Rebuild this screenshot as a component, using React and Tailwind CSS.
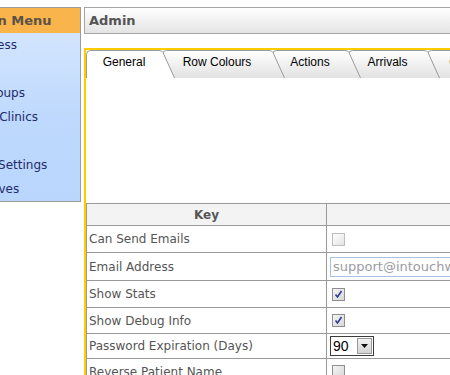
import React from 'react';

const MENU = [
  { label: 'Site Access', shift: 'ml-[-7px]' },
  { label: 'Users', shift: '' },
  { label: 'User Groups', shift: 'ml-[-5px]' },
  { label: 'Mobile Clinics', shift: '' },
  { label: 'Audit', shift: '' },
  { label: 'Global Settings', shift: '' },
  { label: 'Objectives', shift: '' },
];

const TABS = [
  { label: 'General', w: 76, z: 'z-[9]', active: true },
  { label: 'Row Colours', w: 110, z: 'z-[5]' },
  { label: 'Actions', w: 76, z: 'z-[4]' },
  { label: 'Arrivals', w: 79, z: 'z-[3]' },
  { label: 'Clinics', w: 80, z: 'z-[2]' },
];

const TAB_H = 28;

function Tab({ label, w, z, active }) {
  const d = `M0.5,${TAB_H} L0.5,4.5 Q0.5,0.5 4.5,0.5 L${w - 3},0.5 Q${w},0.5 ${w + 1},2.5 L${w + 12.5},${TAB_H}`;
  return (
    <div className={`relative shrink-0 h-[28px] ${z}`} style={{ width: w }}>
      <svg className="absolute left-0 top-0 overflow-visible" width={w + 13} height={TAB_H}>
        <defs>
          <linearGradient id="tabg" x1="0" y1="0" x2="0" y2="1">
            <stop offset="0" stopColor="#ffffff" />
            <stop offset="1" stopColor="#e2e2e2" />
          </linearGradient>
        </defs>
        <path d={d + ' Z'} fill={active ? '#ffffff' : 'url(#tabg)'} stroke="none" />
        <path d={d} fill="none" stroke="#9a9a9a" strokeWidth="1" />
      </svg>
      <div className="relative pt-[5px] text-center text-[12px] leading-[14px] text-black font-['Liberation_Sans',Arial,sans-serif]">
        {label}
      </div>
    </div>
  );
}

function Check({ checked, disabled }) {
  return (
    <span
      className={`inline-flex h-[13px] w-[13px] items-center justify-center border bg-gradient-to-br ${
        disabled
          ? 'border-[#bdbdbd] from-[#ffffff] to-[#e4e4e4]'
          : 'border-[#8e8e8e] from-[#f4f4f4] to-[#d8d8d8]'
      }`}
    >
      {checked && (
        <svg width="9" height="9" viewBox="0 0 9 9">
          <path d="M1.5,4.5 L3.5,7 L7.5,1" fill="none" stroke="#2a3c96" strokeWidth="1.6" />
        </svg>
      )}
    </span>
  );
}

const ROWS = [
  { key: 'Can Send Emails', h: 'h-[27px]', val: <Check disabled /> },
  {
    key: 'Email Address',
    h: 'h-[28px]',
    val: (
      <div className="ml-[-2px] flex h-[20px] w-[220px] items-center border border-[#a9c1de] pl-[2px] text-[13px] text-[#9c9ca4]">
        support@intouchwith.us
      </div>
    ),
  },
  { key: 'Show Stats', h: 'h-[27px]', val: <Check checked /> },
  { key: 'Show Debug Info', h: 'h-[26px]', val: <Check checked /> },
  {
    key: 'Password Expiration (Days)',
    h: 'h-[25px]',
    val: (
      <div className="ml-[-2px] flex h-[20px] w-[44px] items-center border border-[#3c3c3c] bg-white">
        <span className="flex-1 pl-[2px] text-[14px] text-black font-['Liberation_Sans',Arial,sans-serif]">90</span>
        <span className="mr-[1px] flex h-[16px] w-[15px] items-center justify-center border border-[#9a9a9a] bg-gradient-to-b from-[#f2f2f2] to-[#d4d4d4]">
          <svg width="7" height="4" viewBox="0 0 7 4">
            <path d="M0,0 L7,0 L3.5,4 Z" fill="#111" />
          </svg>
        </span>
      </div>
    ),
  },
  { key: 'Reverse Patient Name', h: 'h-[26px]', val: <Check /> },
];

export default function App() {
  return (
    <div className="relative h-[375px] w-[450px] overflow-hidden bg-white font-['DejaVu_Sans',Verdana,sans-serif]">
      <div className="ml-[-70px] flex items-start pt-[7px]">
        {/* side menu */}
        <div className="w-[151px] shrink-0 overflow-hidden border border-[#9c9c9c]">
          <div className="flex h-[25px] items-center justify-center bg-[#f9b44b] pl-[12px] text-[13px] font-bold text-[#5a5248]">
            Main Menu
          </div>
          <div className="bg-gradient-to-b from-[#d3e5fe] via-[#bed9fd] to-[#bad6fd] pl-[25px]">
            {MENU.map((m) => (
              <div key={m.label} className={`flex h-[24px] items-center whitespace-nowrap text-[12px] text-[#1e2a6c] ${m.shift}`}>
                {m.label}
              </div>
            ))}
          </div>
        </div>

        {/* main column */}
        <div className="ml-[3px] w-[600px] shrink-0">
          <div className="flex h-[27px] items-center border border-[#a6a6a6] bg-gradient-to-b from-[#ffffff] to-[#e4e4e4] pl-[4px] text-[13px] font-bold text-[#555]">
            Admin
          </div>

          <div className="mt-[14px] border-l-2 border-t-2 border-[#ffcc00]">
            <div className="flex">
              {TABS.map((t) => (
                <Tab key={t.label} {...t} />
              ))}
            </div>
            <div className="h-[125px]" />

            <div className="border-l border-t border-[#9a9a9a]">
              <div className="grid grid-cols-[240px_1fr] h-[22px] bg-[#f3f3f3] text-[12px] font-bold text-[#555]">
                <div className="flex items-center justify-center border-b border-r border-[#9a9a9a]">Key</div>
                <div className="border-b border-r border-[#9a9a9a]" />
              </div>
              {ROWS.map((r) => (
                <div key={r.key} className={`grid grid-cols-[240px_1fr] ${r.h} text-[12px] text-[#555]`}>
                  <div className="flex items-center border-b border-r border-[#9a9a9a] pl-[2px] whitespace-nowrap">{r.key}</div>
                  <div className="flex items-center border-b border-r border-[#9a9a9a] pl-[5px]">{r.val}</div>
                </div>
              ))}
            </div>
          </div>
        </div>
      </div>
    </div>
  );
}
